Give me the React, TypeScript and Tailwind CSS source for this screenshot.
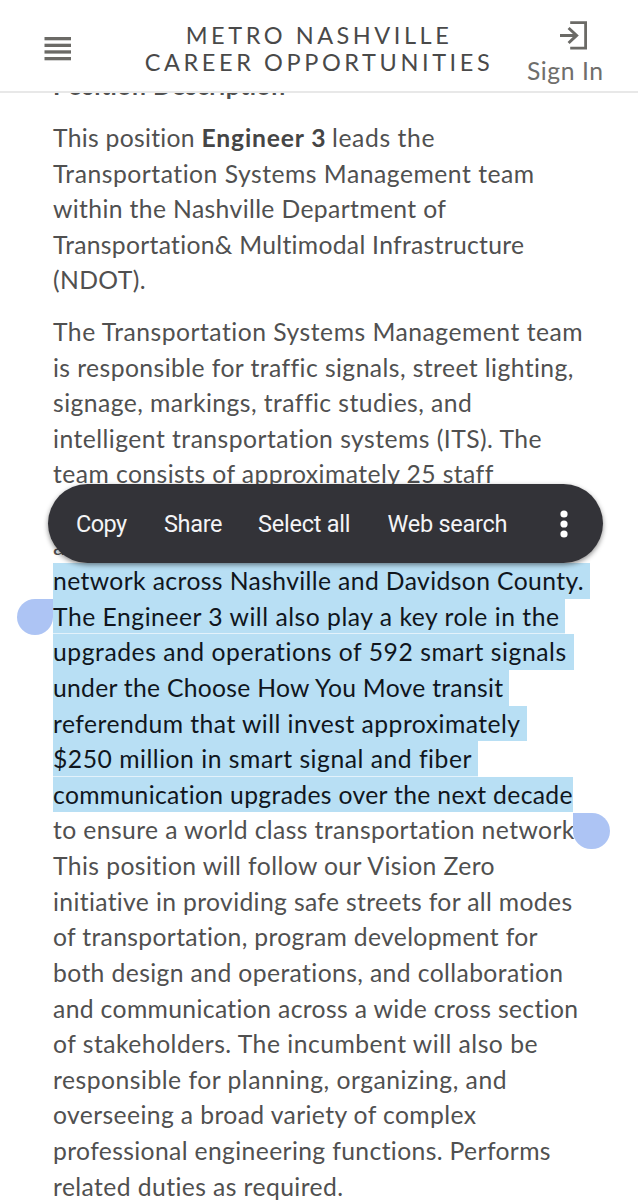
import { useLayoutEffect, useRef, useState, type ReactNode } from "react";

type FitProps = { w: number; className?: string; children: ReactNode };

function Fit({ w, className = "", children }: FitProps) {
  const ref = useRef<HTMLSpanElement>(null);
  const [spacing, setSpacing] = useState(0);
  useLayoutEffect(() => {
    const el = ref.current;
    if (!el) return;
    const count = (el.textContent ?? "").length;
    const natural = el.getBoundingClientRect().width - spacing * count;
    setSpacing((w - natural) / Math.max(1, count - 1));
  }, [w]);
  return (
    <span ref={ref} className={`inline-block whitespace-nowrap ${className}`} style={{ letterSpacing: `${spacing}px` }}>
      {children}
    </span>
  );
}

type Row = { t: string; w: number; sel?: number; gap?: boolean };

const duties: Row[] = [
  { t: "The Transportation Systems Management team", w: 530 },
  { t: "is responsible for traffic signals, street lighting,", w: 519.5 },
  { t: "signage, markings, traffic studies, and", w: 417.5 },
  { t: "intelligent transportation systems (ITS). The", w: 489 },
  { t: "team consists of approximately 25 staff", w: 439.5 },
  { t: "", w: 0 },
  { t: "a", w: 12 },
  { t: "network across Nashville and Davidson County.", w: 530.5, sel: 537 },
  { t: "The Engineer 3 will also play a key role in the", w: 506, sel: 512, gap: true },
  { t: "upgrades and operations of 592 smart signals", w: 513.5, sel: 520.7 },
  { t: "under the Choose How You Move transit", w: 450, sel: 456 },
  { t: "referendum that will invest approximately", w: 467, sel: 474 },
  { t: "$250 million in smart signal and fiber", w: 418, sel: 424.7, gap: true },
  { t: "communication upgrades over the next decade", w: 520, sel: 520 },
  { t: "to ensure a world class transportation network.", w: 528 },
  { t: "This position will follow our Vision Zero", w: 442 },
  { t: "initiative in providing safe streets for all modes", w: 520 },
  { t: "of transportation, program development for", w: 485 },
  { t: "both design and operations, and collaboration", w: 511 },
  { t: "and communication across a wide cross section", w: 526 },
  { t: "of stakeholders. The incumbent will also be", w: 484.5 },
  { t: "responsible for planning, organizing, and", w: 453.5 },
  { t: "overseeing a broad variety of complex", w: 423 },
  { t: "professional engineering functions. Performs", w: 498 },
  { t: "related duties as required.", w: 290.5 },
];

const intro: Row[] = [
  { t: "Transportation Systems Management team", w: 481.5 },
  { t: "within the Nashville Department of", w: 393 },
  { t: "Transportation& Multimodal Infrastructure", w: 472 },
  { t: "(NDOT).", w: 92.5 },
];

function Line({ row }: { row: Row }) {
  if (row.sel) {
    return (
      <div
        className={`h-[35.62px] bg-[#b8dff4] text-[#10161d] ${row.gap ? "border-b border-[#e3f2fb]" : ""}`}
        style={{ width: row.sel }}
      >
        <Fit w={row.w}>{row.t}</Fit>
      </div>
    );
  }
  return <div className="h-[35.62px]">{row.t && <Fit w={row.w}>{row.t}</Fit>}</div>;
}

function Header() {
  return (
    <header className="relative z-10 flex h-[93px] border-b-2 border-[#e8e8e8] bg-white text-[#494949]">
      <div className="w-[146px] pt-[37px] pl-[44px]">
        <svg width="28" height="25" viewBox="0 0 28 25" fill="#6b6a66">
          <rect x=".5" y="0" width="26.5" height="3.3" />
          <rect x=".5" y="6.7" width="26.5" height="3.3" />
          <rect x=".5" y="13.3" width="26.5" height="3.3" />
          <rect x=".5" y="20" width="26.5" height="3.3" />
        </svg>
      </div>
      <h1 className="flex w-[346px] flex-col items-center pt-[22px] text-[23.5px] leading-[27px] font-normal">
        <Fit w={263}>METRO NASHVILLE</Fit>
        <Fit w={345}>CAREER OPPORTUNITIES</Fit>
      </h1>
      <div className="flex flex-1 flex-col pl-[35px] text-[#6f6e6b]">
        <svg className="mt-[20px] ml-[32px]" width="30" height="31" viewBox="0 0 30 31" fill="none" stroke="#6b6a66" strokeWidth="2.8">
          <path d="M11.2 2.6H26.6V28.2H11.2" />
          <path d="M1 15.4H17.4M9.6 8L17.6 15.4L9.6 23" strokeWidth="3" />
        </svg>
        <div className="mt-[3px] h-[34px] text-[24.7px] leading-[34px]">
          <Fit w={76}>Sign In</Fit>
        </div>
      </div>
    </header>
  );
}

function SelectionMenu() {
  return (
    <div className="absolute top-[484px] left-[48px] z-20 flex h-[79px] w-[555px] items-center rounded-full bg-[#333338] pl-[28px] font-[Roboto,sans-serif] text-[23.5px] text-[#f4f4f6] shadow-[0_2px_5px_rgba(0,0,0,0.45)]">
      <div className="w-[88px] pt-[3px]"><Fit w={51}>Copy</Fit></div>
      <div className="w-[94px] pt-[3px]"><Fit w={58.5}>Share</Fit></div>
      <div className="w-[129.5px] pt-[3px]"><Fit w={92.5}>Select all</Fit></div>
      <div className="w-[172.5px] pt-[3px]"><Fit w={120}>Web search</Fit></div>
      <svg width="8" height="28" viewBox="0 0 8 28" fill="#fff">
        <circle cx="4" cy="4" r="3.6" />
        <circle cx="4" cy="14" r="3.6" />
        <circle cx="4" cy="24" r="3.6" />
      </svg>
    </div>
  );
}

export default function App() {
  return (
    <div className="relative h-[1200px] w-[638px] overflow-hidden bg-white font-[Lato,sans-serif] text-[24.7px] leading-[35.3px] text-[#505050]">
      <Header />
      <main className="-mt-[25px] pl-[53px]">
        <h2 className="h-[35.62px] font-bold"><Fit w={233}>Position Description</Fit></h2>
        <p className="mt-[16.3px] flex h-[35.62px]">
          <span className="w-[148.5px]"><Fit w={142}>This position</Fit></span>
          <b className="w-[130.5px] text-[#454545]"><Fit w={124}>Engineer 3</Fit></b>
          <Fit w={102.5}>leads the</Fit>
        </p>
        {intro.map((row) => <Line key={row.t} row={row} />)}
        <div className="mt-[16px]">
          {duties.map((row, i) => <Line key={i} row={row} />)}
        </div>
      </main>
      <SelectionMenu />
      <div className="absolute top-[599px] left-[17px] size-[36px] rounded-full rounded-tr-none bg-[#adc4f4]" />
      <div className="absolute top-[812.5px] left-[573px] size-[36.5px] rounded-full rounded-tl-none bg-[#adc4f4]" />
    </div>
  );
}
